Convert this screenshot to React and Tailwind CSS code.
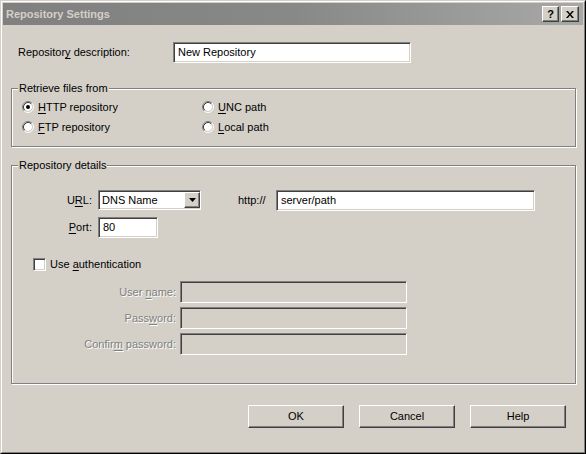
import React from 'react';

// sunken 3d edge used by edit boxes
const sunken =
  'border border-t-[#808080] border-l-[#808080] border-r-white border-b-white shadow-[inset_1px_1px_0_#404040,inset_-1px_-1px_0_#d4d0c8]';
// raised 3d edge used by push buttons
const raised =
  'border border-t-white border-l-white border-r-[#404040] border-b-[#404040] shadow-[inset_-1px_-1px_0_#808080,inset_1px_1px_0_#d4d0c8]';

function U({ children }) {
  return <span className="underline underline-offset-2">{children}</span>;
}

function Radio({ checked }) {
  return (
    <svg width="12" height="12" viewBox="0 0 12 12" className="shrink-0">
      <circle cx="6" cy="6" r="4" fill="white" />
      <path d="M2.11 9.89 A5.5 5.5 0 0 1 9.89 2.11" fill="none" stroke="#808080" />
      <path d="M9.89 2.11 A5.5 5.5 0 0 1 2.11 9.89" fill="none" stroke="#ffffff" />
      <path d="M2.82 9.18 A4.5 4.5 0 0 1 9.18 2.82" fill="none" stroke="#404040" />
      <path d="M9.18 2.82 A4.5 4.5 0 0 1 2.82 9.18" fill="none" stroke="#d4d0c8" />
      {checked && <circle cx="6" cy="6" r="2" fill="black" />}
    </svg>
  );
}

function RadioItem({ checked, children }) {
  return (
    <div className="flex items-center gap-[4px] h-[20px]">
      <Radio checked={checked} />
      <span>{children}</span>
    </div>
  );
}

function Group({ title, className, children }) {
  return (
    <div className={`relative border border-[#808080] shadow-[inset_1px_1px_0_white,1px_1px_0_white] ${className}`}>
      <span className="absolute -top-[8px] left-[6px] bg-[#d4d0c8] px-[1px] leading-[14px]">{title}</span>
      {children}
    </div>
  );
}

function Edit({ className, value, disabled }) {
  return (
    <div className={`${sunken} ${disabled ? 'bg-[#d4d0c8]' : 'bg-white'} flex items-center pl-[4px] ${className}`}>
      {value}
    </div>
  );
}

function Button({ children }) {
  return (
    <div className={`${raised} w-[96px] h-[23px] flex items-center justify-center`}>{children}</div>
  );
}

const disabledText = 'text-[#808080] [text-shadow:1px_1px_0_white]';

export default function App() {
  return (
    <div className="w-[586px] h-[454px] bg-[#d4d0c8] border border-t-[#d4d0c8] border-l-[#d4d0c8] border-r-black border-b-black font-['Liberation_Sans',Arial,sans-serif] text-[11px] text-black select-none">
      <div className="h-full border border-t-white border-l-white border-r-[#808080] border-b-[#808080] p-px flex flex-col">
        {/* title bar */}
        <div className="h-[22px] shrink-0 flex items-center pl-[3px] pr-[4px] bg-gradient-to-r from-[#808080] via-[#888888] to-[#a8a8a8]">
          <span className="font-bold text-[#d4d0c8] text-[11px]">Repository Settings</span>
          <div className="ml-auto flex gap-[2px]">
            <div className={`${raised} w-[17px] h-[16px] flex items-center justify-center font-bold text-[11px] leading-none bg-[#d4d0c8]`}>?</div>
            <div className={`${raised} w-[18px] h-[16px] flex items-center justify-center bg-[#d4d0c8]`}>
              <svg width="8" height="7" viewBox="0 0 8 7">
                <path d="M0 0h2l2 2.5L6 0h2L5 3.5 8 7H6L4 4.5 2 7H0l3-3.5z" fill="black" />
              </svg>
            </div>
          </div>
        </div>

        {/* body */}
        <div className="flex flex-col pl-[8px] pr-[7px]">
          <div className="mt-[17px] h-[21px] flex items-center">
            <span className="pl-[7px] w-[162px]">
              Repositor<U>y</U> description:
            </span>
            <Edit className="w-[238px] h-[21px]" value="New Repository" />
          </div>

          <Group title="Retrieve files from" className="mt-[25px] h-[59px]">
            <div className="grid grid-cols-[180px_1fr] pl-[10px] pt-[8px]">
              <RadioItem checked>
                <U>H</U>TTP repository
              </RadioItem>
              <RadioItem>
                <U>U</U>NC path
              </RadioItem>
              <RadioItem>
                <U>F</U>TP repository
              </RadioItem>
              <RadioItem>
                <U>L</U>ocal path
              </RadioItem>
            </div>
          </Group>

          <Group title="Repository details" className="mt-[18px] h-[219px]">
            <div className="flex flex-col pt-[24px]">
              <div className="flex items-center h-[20px]">
                <span className="w-[80px] text-right">
                  U<U>R</U>L:
                </span>
                <div className={`${sunken} bg-white ml-[6px] w-[103px] h-[20px] flex items-center pl-[3px]`}>
                  <span className="flex-1">DNS Name</span>
                  <div className={`${raised} bg-[#d4d0c8] w-[16px] h-[16px] flex items-center justify-center`}>
                    <svg width="7" height="4" viewBox="0 0 7 4">
                      <path d="M0 0h7L3.5 4z" fill="black" />
                    </svg>
                  </div>
                </div>
                <span className="ml-[37px] w-[38px]">http://</span>
                <Edit className="w-[259px] h-[21px]" value="server/path" />
              </div>

              <div className="flex items-center h-[21px] mt-[7px]">
                <span className="w-[80px] text-right">
                  <U>P</U>ort:
                </span>
                <Edit className="ml-[6px] w-[60px] h-[21px]" value="80" />
              </div>

              <div className="flex items-center h-[13px] mt-[20px] pl-[21px] gap-[4px]">
                <div className={`${sunken} bg-white w-[13px] h-[13px]`} />
                <span>
                  Use <U>a</U>uthentication
                </span>
              </div>

              <div className="flex flex-col gap-[4px] mt-[10px]">
                {[
                  ['User ', 'n', 'ame:'],
                  ['Pass', 'w', 'ord:'],
                  ['Confir', 'm', ' password:'],
                ].map(([a, u, b]) => (
                  <div key={a} className="flex items-center h-[22px]">
                    <span className={`w-[164px] text-right ${disabledText}`}>
                      {a}
                      <U>{u}</U>
                      {b}
                    </span>
                    <Edit className="ml-[4px] w-[227px] h-[22px]" disabled />
                  </div>
                ))}
              </div>
            </div>
          </Group>

          <div className="mt-[21px] flex justify-end gap-[15px] pr-[10px]">
            <Button>OK</Button>
            <Button>Cancel</Button>
            <Button>Help</Button>
          </div>
        </div>
      </div>
    </div>
  );
}
